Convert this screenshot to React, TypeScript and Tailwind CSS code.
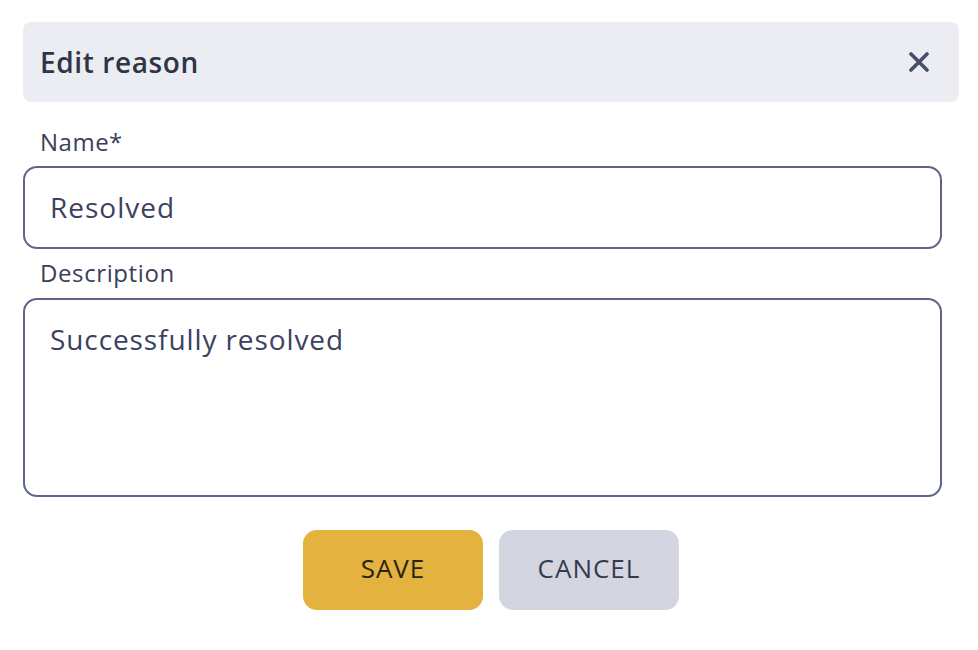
import React from "react";

export default function App() {
  const font = { fontFamily: '"Open Sans", "Noto Sans", sans-serif' };
  return (
    <div className="w-[978px] h-[650px] bg-white" style={font}>
      <div className="pt-[22px] pl-[23px]">
        <div className="w-[936px] h-[80px] rounded-[8px] bg-[#ECEDF2] flex items-center justify-between pl-[17px] pr-[30px]">
          <span className="text-[28px] font-semibold text-[#2F3447] tracking-[0.6px]">Edit reason</span>
          <svg width="20" height="20" viewBox="0 0 20 20" className="text-[#474E6A]">
            <path d="M2 2 L18 18 M18 2 L2 18" stroke="currentColor" strokeWidth="3.6" strokeLinecap="round" />
          </svg>
        </div>
        <div className="w-[919px]">
          <div className="mt-[24px] h-[32px] leading-[32px] pl-[17px] text-[24px] font-medium text-[#3A4058] tracking-[0.5px]">Name*</div>
          <div className="mt-[8px] h-[83px] rounded-[14px] border-2 border-[#5E6688] flex items-center pl-[25px] pb-[2px] text-[28px] text-[#3B4260] tracking-[1px]">
            Resolved
          </div>
          <div className="mt-[8px] h-[32px] leading-[32px] pl-[17px] text-[24px] font-medium text-[#3A4058] tracking-[0.6px]">Description</div>
          <div className="mt-[9px] h-[199px] rounded-[14px] border-2 border-[#5E6688] pl-[25px] pt-[21px] text-[28px] leading-[36px] text-[#3B4260] tracking-[0.9px]">
            Successfully resolved
          </div>
        </div>
      </div>
      <div className="mt-[33px] flex justify-center gap-[16px] pl-[4px]">
        <button className="w-[180px] h-[80px] rounded-[14px] bg-[#E3B23F] pb-[3px] text-[26px] font-medium text-[#2A2410] tracking-[1px]">SAVE</button>
        <button className="w-[180px] h-[80px] rounded-[14px] bg-[#D3D6E0] pb-[3px] text-[26px] font-medium text-[#353A50] tracking-[1px]">CANCEL</button>
      </div>
    </div>
  );
}
